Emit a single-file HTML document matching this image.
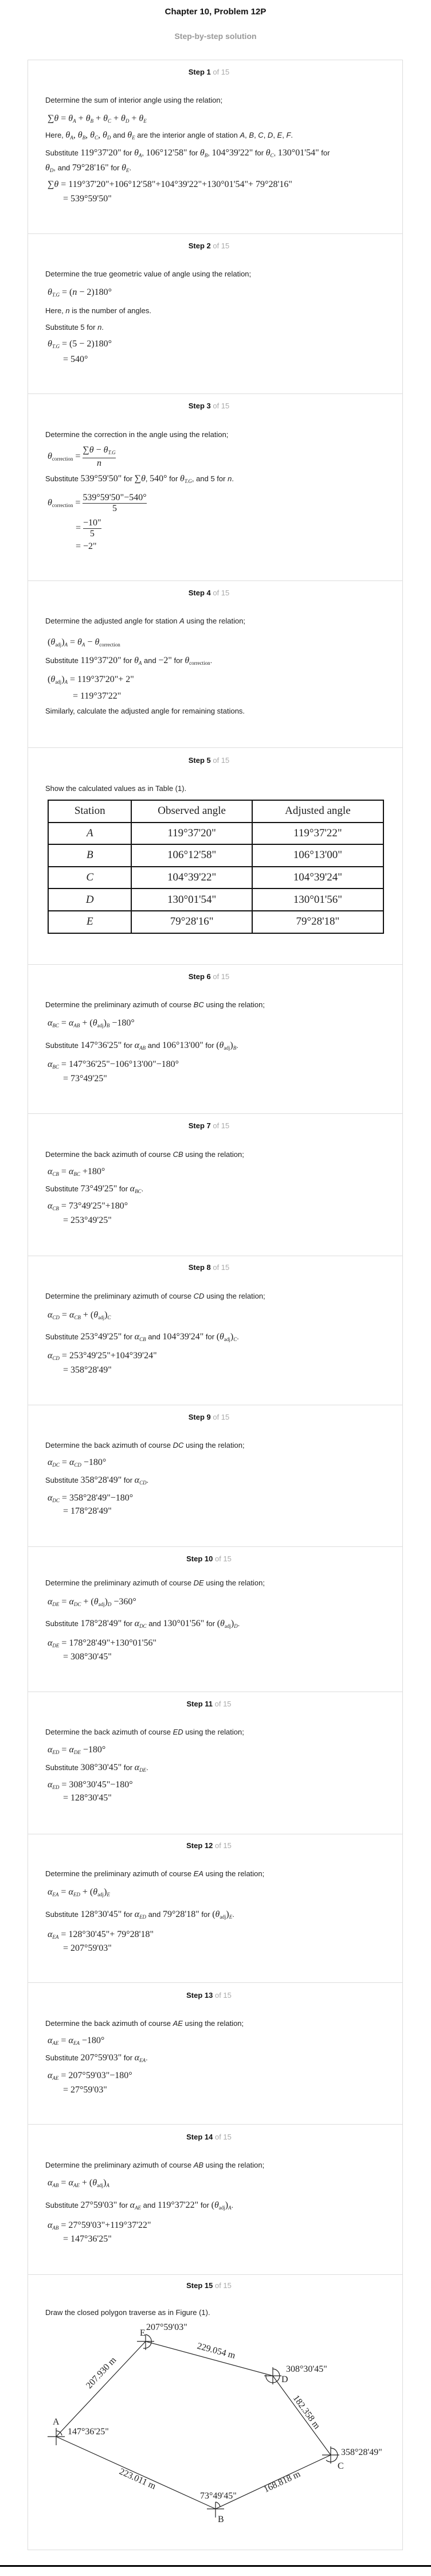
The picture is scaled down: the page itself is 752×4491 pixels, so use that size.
<!DOCTYPE html>
<html><head><meta charset="utf-8">
<style>
*{margin:0;padding:0;box-sizing:border-box}
body{width:752px;height:4491px;position:relative;background:#fff;font-family:"Liberation Sans",Arial,sans-serif;color:#222;overflow:hidden}
.h1{position:absolute;left:0;width:752px;text-align:center;font-weight:bold;font-size:15px;top:11px;line-height:20px;color:#111}
.h2{position:absolute;left:0;width:752px;text-align:center;font-weight:bold;font-size:14px;top:53px;line-height:20px;color:#999}
.box{position:absolute;left:48px;width:655px;top:104px;height:4342px;border:1px solid #ddd}
.sep{position:absolute;left:48px;width:655px;height:1px;background:#ddd}
.st{position:absolute;left:48px;width:633px;text-align:center;font-size:13px;font-weight:bold;line-height:20px;color:#111}
.st span{font-weight:normal;color:#aaa}
.l{position:absolute;left:79px;font-size:13px;line-height:20px;white-space:nowrap;color:#222}
.m{font-family:"Liberation Serif","Times New Roman",serif;font-size:16px}
.f{position:absolute;left:83px;font-family:"Liberation Serif","Times New Roman",serif;font-size:16px;line-height:20px;white-space:nowrap;color:#222}
.c{position:absolute;left:110px;font-family:"Liberation Serif","Times New Roman",serif;font-size:16px;line-height:20px;white-space:nowrap;color:#222}
i{font-style:italic}
sub{font-size:9px;vertical-align:-3px;font-style:italic}
sub.n{font-style:normal}
.fr{display:inline-block;vertical-align:middle;text-align:center}
.fr b{display:block;font-weight:normal;line-height:18px}
.fr b.top{border-bottom:1px solid #333}
table{position:absolute;left:83px;top:1394px;width:587px;border-collapse:collapse;font-family:"Liberation Serif","Times New Roman",serif}
td{border:2px solid #111;height:38.6px;text-align:center;font-size:19px}
tr:first-child td{font-size:19px}
.endbar{position:absolute;left:0;top:4472px;width:752px;height:3px;background:#000}
</style></head><body>
<div class="h1">Chapter 10, Problem 12P</div>
<div class="h2">Step-by-step solution</div>
<div class="box"></div>

<!-- separators -->
<div class="sep" style="top:407px"></div>
<div class="sep" style="top:686px"></div>
<div class="sep" style="top:1012px"></div>
<div class="sep" style="top:1303px"></div>
<div class="sep" style="top:1681px"></div>
<div class="sep" style="top:1941px"></div>
<div class="sep" style="top:2189px"></div>
<div class="sep" style="top:2449px"></div>
<div class="sep" style="top:2696px"></div>
<div class="sep" style="top:2949px"></div>
<div class="sep" style="top:3197px"></div>
<div class="sep" style="top:3456px"></div>
<div class="sep" style="top:3703px"></div>
<div class="sep" style="top:3965px"></div>

<!-- Step 1 -->
<div class="st" style="top:116px">Step 1 <span>of 15</span></div>
<div class="l" style="top:165px">Determine the sum of interior angle using the relation;</div>
<div class="f" style="top:197px">∑<i>θ</i> = <i>θ</i><sub>A</sub> + <i>θ</i><sub>B</sub> + <i>θ</i><sub>C</sub> + <i>θ</i><sub>D</sub> + <i>θ</i><sub>E</sub></div>
<div class="l" style="top:226px">Here, <span class="m"><i>θ</i><sub>A</sub>, <i>θ</i><sub>B</sub>, <i>θ</i><sub>C</sub>, <i>θ</i><sub>D</sub></span> and <span class="m"><i>θ</i><sub>E</sub></span> are the interior angle of station <i>A</i>, <i>B</i>, <i>C</i>, <i>D</i>, <i>E</i>, <i>F</i>.</div>
<div class="l" style="top:257px">Substitute <span class="m">119°37'20"</span> for <span class="m"><i>θ</i><sub>A</sub></span>, <span class="m">106°12'58"</span> for <span class="m"><i>θ</i><sub>B</sub></span>, <span class="m">104°39'22"</span> for <span class="m"><i>θ</i><sub>C</sub></span>, <span class="m">130°01'54"</span> for</div>
<div class="l" style="top:283px"><span class="m"><i>θ</i><sub>D</sub></span>, and <span class="m">79°28'16"</span> for <span class="m"><i>θ</i><sub>E</sub></span>.</div>
<div class="f" style="top:312px">∑<i>θ</i> = 119°37'20"+106°12'58"+104°39'22"+130°01'54"+ 79°28'16"</div>
<div class="c" style="top:337px">= 539°59'50"</div>

<!-- Step 2 -->
<div class="st" style="top:419px">Step 2 <span>of 15</span></div>
<div class="l" style="top:468px">Determine the true geometric value of angle using the relation;</div>
<div class="f" style="top:500px"><i>θ</i><sub>T.G</sub> = (<i>n</i> − 2)180°</div>
<div class="l" style="top:532px">Here, <i>n</i> is the number of angles.</div>
<div class="l" style="top:561px">Substitute 5 for <i>n</i>.</div>
<div class="f" style="top:590px"><i>θ</i><sub>T.G</sub> = (5 − 2)180°</div>
<div class="c" style="top:617px">= 540°</div>

<!-- Step 3 -->
<div class="st" style="top:698px">Step 3 <span>of 15</span></div>
<div class="l" style="top:748px">Determine the correction in the angle using the relation;</div>
<div class="f" style="top:776px"><i>θ</i><sub class="n">correction</sub> = <span class="fr"><b class="top">∑<i>θ</i> − <i>θ</i><sub>T.G</sub></b><b><i>n</i></b></span></div>
<div class="l" style="top:825px">Substitute <span class="m">539°59'50"</span> for <span class="m">∑<i>θ</i></span>, <span class="m">540°</span> for <span class="m"><i>θ</i><sub>T.G</sub></span>, and 5 for <i>n</i>.</div>
<div class="f" style="top:859px"><i>θ</i><sub class="n">correction</sub> = <span class="fr"><b class="top">539°59'50"−540°</b><b>5</b></span></div>
<div class="f" style="top:903px;left:132px">= <span class="fr"><b class="top">−10"</b><b>5</b></span></div>
<div class="f" style="top:943px;left:132px">= −2"</div>

<!-- Step 4 -->
<div class="st" style="top:1024px">Step 4 <span>of 15</span></div>
<div class="l" style="top:1073px">Determine the adjusted angle for station <i>A</i> using the relation;</div>
<div class="f" style="top:1110px">(<i>θ</i><sub class="n">adj</sub>)<sub>A</sub> = <i>θ</i><sub>A</sub> − <i>θ</i><sub class="n">correction</sub></div>
<div class="l" style="top:1142px">Substitute <span class="m">119°37'20"</span> for <span class="m"><i>θ</i><sub>A</sub></span> and <span class="m">−2"</span> for <span class="m"><i>θ</i><sub class="n">correction</sub></span>.</div>
<div class="f" style="top:1175px">(<i>θ</i><sub class="n">adj</sub>)<sub>A</sub> = 119°37'20"+ 2"</div>
<div class="f" style="top:1204px;left:127px">= 119°37'22"</div>
<div class="l" style="top:1230px">Similarly, calculate the adjusted angle for remaining stations.</div>

<!-- Step 5 -->
<div class="st" style="top:1316px">Step 5 <span>of 15</span></div>
<div class="l" style="top:1365px">Show the calculated values as in Table (1).</div>
<table>
<colgroup><col style="width:146px"><col style="width:211px"><col style="width:230px"></colgroup>
<tr><td>Station</td><td>Observed angle</td><td>Adjusted angle</td></tr>
<tr><td><i>A</i></td><td>119°37'20"</td><td>119°37'22"</td></tr>
<tr><td><i>B</i></td><td>106°12'58"</td><td>106°13'00"</td></tr>
<tr><td><i>C</i></td><td>104°39'22"</td><td>104°39'24"</td></tr>
<tr><td><i>D</i></td><td>130°01'54"</td><td>130°01'56"</td></tr>
<tr><td><i>E</i></td><td>79°28'16"</td><td>79°28'18"</td></tr>
</table>

<!-- Step 6 -->
<div class="st" style="top:1693px">Step 6 <span>of 15</span></div>
<div class="l" style="top:1742px">Determine the preliminary azimuth of course <i>BC</i> using the relation;</div>
<div class="f" style="top:1774px"><i>α</i><sub>BC</sub> = <i>α</i><sub>AB</sub> + (<i>θ</i><sub class="n">adj</sub>)<sub>B</sub> −180°</div>
<div class="l" style="top:1813px">Substitute <span class="m">147°36'25"</span> for <span class="m"><i>α</i><sub>AB</sub></span> and <span class="m">106°13'00"</span> for <span class="m">(<i>θ</i><sub class="n">adj</sub>)<sub>B</sub></span>.</div>
<div class="f" style="top:1846px"><i>α</i><sub>BC</sub> = 147°36'25"−106°13'00"−180°</div>
<div class="c" style="top:1871px">= 73°49'25"</div>

<!-- Step 7 -->
<div class="st" style="top:1953px">Step 7 <span>of 15</span></div>
<div class="l" style="top:2003px">Determine the back azimuth of course <i>CB</i> using the relation;</div>
<div class="f" style="top:2033px"><i>α</i><sub>CB</sub> = <i>α</i><sub>BC</sub> +180°</div>
<div class="l" style="top:2063px">Substitute <span class="m">73°49'25"</span> for <span class="m"><i>α</i><sub>BC</sub></span>.</div>
<div class="f" style="top:2093px"><i>α</i><sub>CB</sub> = 73°49'25"+180°</div>
<div class="c" style="top:2118px">= 253°49'25"</div>

<!-- Step 8 -->
<div class="st" style="top:2200px">Step 8 <span>of 15</span></div>
<div class="l" style="top:2250px">Determine the preliminary azimuth of course <i>CD</i> using the relation;</div>
<div class="f" style="top:2283px"><i>α</i><sub>CD</sub> = <i>α</i><sub>CB</sub> + (<i>θ</i><sub class="n">adj</sub>)<sub>C</sub></div>
<div class="l" style="top:2321px">Substitute <span class="m">253°49'25"</span> for <span class="m"><i>α</i><sub>CB</sub></span> and <span class="m">104°39'24"</span> for <span class="m">(<i>θ</i><sub class="n">adj</sub>)<sub>C</sub></span>.</div>
<div class="f" style="top:2354px"><i>α</i><sub>CD</sub> = 253°49'25"+104°39'24"</div>
<div class="c" style="top:2379px">= 358°28'49"</div>

<!-- Step 9 -->
<div class="st" style="top:2461px">Step 9 <span>of 15</span></div>
<div class="l" style="top:2510px">Determine the back azimuth of course <i>DC</i> using the relation;</div>
<div class="f" style="top:2540px"><i>α</i><sub>DC</sub> = <i>α</i><sub>CD</sub> −180°</div>
<div class="l" style="top:2571px">Substitute <span class="m">358°28'49"</span> for <span class="m"><i>α</i><sub>CD</sub></span>.</div>
<div class="f" style="top:2602px"><i>α</i><sub>DC</sub> = 358°28'49"−180°</div>
<div class="c" style="top:2625px">= 178°28'49"</div>

<!-- Step 10 -->
<div class="st" style="top:2708px">Step 10 <span>of 15</span></div>
<div class="l" style="top:2750px">Determine the preliminary azimuth of course <i>DE</i> using the relation;</div>
<div class="f" style="top:2783px"><i>α</i><sub>DE</sub> = <i>α</i><sub>DC</sub> + (<i>θ</i><sub class="n">adj</sub>)<sub>D</sub> −360°</div>
<div class="l" style="top:2821px">Substitute <span class="m">178°28'49"</span> for <span class="m"><i>α</i><sub>DC</sub></span> and <span class="m">130°01'56"</span> for <span class="m">(<i>θ</i><sub class="n">adj</sub>)<sub>D</sub></span>.</div>
<div class="f" style="top:2855px"><i>α</i><sub>DE</sub> = 178°28'49"+130°01'56"</div>
<div class="c" style="top:2879px">= 308°30'45"</div>

<!-- Step 11 -->
<div class="st" style="top:2961px">Step 11 <span>of 15</span></div>
<div class="l" style="top:3010px">Determine the back azimuth of course <i>ED</i> using the relation;</div>
<div class="f" style="top:3041px"><i>α</i><sub>ED</sub> = <i>α</i><sub>DE</sub> −180°</div>
<div class="l" style="top:3072px">Substitute <span class="m">308°30'45"</span> for <span class="m"><i>α</i><sub>DE</sub></span>.</div>
<div class="f" style="top:3102px"><i>α</i><sub>ED</sub> = 308°30'45"−180°</div>
<div class="c" style="top:3125px">= 128°30'45"</div>

<!-- Step 12 -->
<div class="st" style="top:3208px">Step 12 <span>of 15</span></div>
<div class="l" style="top:3257px">Determine the preliminary azimuth of course <i>EA</i> using the relation;</div>
<div class="f" style="top:3289px"><i>α</i><sub>EA</sub> = <i>α</i><sub>ED</sub> + (<i>θ</i><sub class="n">adj</sub>)<sub>E</sub></div>
<div class="l" style="top:3328px">Substitute <span class="m">128°30'45"</span> for <span class="m"><i>α</i><sub>ED</sub></span> and <span class="m">79°28'18"</span> for <span class="m">(<i>θ</i><sub class="n">adj</sub>)<sub>E</sub></span>.</div>
<div class="f" style="top:3363px"><i>α</i><sub>EA</sub> = 128°30'45"+ 79°28'18"</div>
<div class="c" style="top:3387px">= 207°59'03"</div>

<!-- Step 13 -->
<div class="st" style="top:3469px">Step 13 <span>of 15</span></div>
<div class="l" style="top:3518px">Determine the back azimuth of course <i>AE</i> using the relation;</div>
<div class="f" style="top:3548px"><i>α</i><sub>AE</sub> = <i>α</i><sub>EA</sub> −180°</div>
<div class="l" style="top:3578px">Substitute <span class="m">207°59'03"</span> for <span class="m"><i>α</i><sub>EA</sub></span>.</div>
<div class="f" style="top:3609px"><i>α</i><sub>AE</sub> = 207°59'03"−180°</div>
<div class="c" style="top:3634px">= 27°59'03"</div>

<!-- Step 14 -->
<div class="st" style="top:3716px">Step 14 <span>of 15</span></div>
<div class="l" style="top:3765px">Determine the preliminary azimuth of course <i>AB</i> using the relation;</div>
<div class="f" style="top:3796px"><i>α</i><sub>AB</sub> = <i>α</i><sub>AE</sub> + (<i>θ</i><sub class="n">adj</sub>)<sub>A</sub></div>
<div class="l" style="top:3835px">Substitute <span class="m">27°59'03"</span> for <span class="m"><i>α</i><sub>AE</sub></span> and <span class="m">119°37'22"</span> for <span class="m">(<i>θ</i><sub class="n">adj</sub>)<sub>A</sub></span>.</div>
<div class="f" style="top:3870px"><i>α</i><sub>AB</sub> = 27°59'03"+119°37'22"</div>
<div class="c" style="top:3894px">= 147°36'25"</div>

<!-- Step 15 -->
<div class="st" style="top:3975px">Step 15 <span>of 15</span></div>
<div class="l" style="top:4022px">Draw the closed polygon traverse as in Figure (1).</div>

<svg style="position:absolute;left:0;top:4040px" width="752" height="370" viewBox="0 4040 752 370" font-family="Liberation Serif, Times New Roman, serif" font-size="16" fill="#222">
<g stroke="#222" stroke-width="1.2" fill="none">
<polyline points="98,4248 254,4082 476,4142 577,4280 376,4374 98,4248"/>
<!-- crosshairs -->
<line x1="83" y1="4248" x2="113" y2="4248"/><line x1="98" y1="4233" x2="98" y2="4263"/>
<line x1="239" y1="4082" x2="269" y2="4082"/><line x1="254" y1="4070" x2="254" y2="4097"/>
<line x1="461" y1="4142" x2="491" y2="4142"/><line x1="476" y1="4127" x2="476" y2="4157"/>
<line x1="562" y1="4280" x2="592" y2="4280"/><line x1="577" y1="4265" x2="577" y2="4295"/>
<line x1="361" y1="4374" x2="391" y2="4374"/><line x1="376" y1="4362" x2="376" y2="4389"/>
<!-- arcs -->
<path d="M98,4238 A10,10 0 0 1 108,4246"/>
<path d="M254,4070 A12,12 0 1 1 250,4094"/>
<path d="M476,4130 A12,12 0 1 1 464,4140"/>
<path d="M577,4268 A12,12 0 1 1 569,4289"/>
<path d="M376,4362 A10,10 0 0 1 384,4370"/>
</g>
<text x="244" y="4072" font-size="16">E</text>
<text x="255" y="4062">207°59'03"</text>
<text x="499" y="4135">308°30'45"</text>
<text x="491" y="4153">D</text>
<text x="595" y="4280">358°28'49"</text>
<text x="589" y="4304">C</text>
<text x="349" y="4356">73°49'45"</text>
<text x="380" y="4397">B</text>
<text x="92" y="4227">A</text>
<text x="118" y="4244">147°36'25"</text>
<text transform="translate(376,4103) rotate(15)" text-anchor="middle">229.054 m</text>
<text transform="translate(531,4208) rotate(54)" text-anchor="middle">182.358 m</text>
<text transform="translate(494,4331) rotate(-25)" text-anchor="middle">168.818 m</text>
<text transform="translate(238,4326) rotate(24)" text-anchor="middle">223.011 m</text>
<text transform="translate(180,4140) rotate(-47)" text-anchor="middle">207.930 m</text>
</svg>

<div class="endbar"></div>
</body></html>
